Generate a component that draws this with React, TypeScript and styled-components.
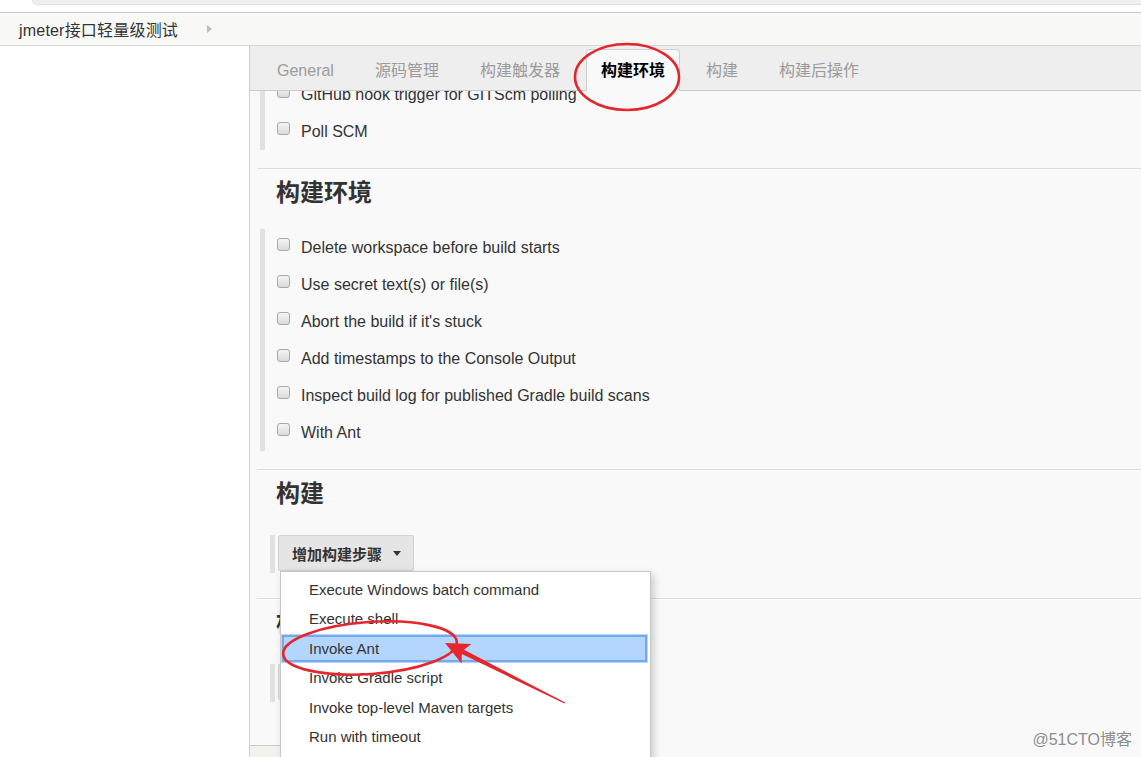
import React from 'react';
import styled, { createGlobalStyle } from 'styled-components';

const FONT = `'Liberation Sans', 'Noto Sans CJK SC', Arial, sans-serif`;

const GlobalStyle = createGlobalStyle`
  html, body {
    margin: 0;
    padding: 0;
    background: #fff;
    overflow: hidden;
  }
  body {
    font-family: ${FONT};
    color: #333;
  }
  * {
    box-sizing: border-box;
  }
`;

const Page = styled.div`
  position: relative;
  width: 1141px;
  height: 757px;
  display: flex;
  flex-direction: column;
  overflow: hidden;
`;

const TopStrip = styled.div`
  height: 13px;
  padding-left: 32px;
  background: #fff;
  border-bottom: 1px solid #c9c9c9;
`;

const StripBand = styled.div`
  height: 5px;
  background: #efefef;
  border-left: 1px solid #e0e0e0;
  border-bottom: 1px solid #e0e0e0;
  border-bottom-left-radius: 6px;
`;

const Breadcrumb = styled.div`
  height: 33px;
  display: flex;
  align-items: center;
  padding-left: 19px;
  background: #f8f8f6;
  border-bottom: 1px solid #d6d6d6;
  font-size: 16px;
  letter-spacing: 0.2px;
  color: #333;
`;

const CrumbArrow = styled.span`
  margin-left: 29px;
  width: 0;
  height: 0;
  border-left: 5px solid #bdbdbd;
  border-top: 4px solid transparent;
  border-bottom: 4px solid transparent;
`;

const Body = styled.div`
  flex: 1;
  display: flex;
  min-height: 0;
`;

const SidePanel = styled.div`
  width: 249px;
  background: #fff;
`;

const MainPanel = styled.div`
  flex: 1;
  min-width: 0;
  display: flex;
  flex-direction: column;
  background: #f9f9f9;
  border-left: 1px solid #cfcfcf;
`;

const TabBar = styled.div`
  position: relative;
  z-index: 2;
  height: 45px;
  display: flex;
  align-items: flex-end;
  gap: 11px;
  padding-left: 12px;
  background: #eee;
  border-bottom: 1px solid #cbcbcb;
`;

const Tab = styled.div<{ $active?: boolean }>`
  height: 42px;
  line-height: 41px;
  margin-bottom: -1px;
  padding: 0 14px;
  font-size: 16px;
  color: ${(p) => (p.$active ? '#000' : '#9b9b9b')};
  font-weight: ${(p) => (p.$active ? 'bold' : 'normal')};
  background: ${(p) => (p.$active ? '#f9f9f9' : 'transparent')};
  border: 1px solid ${(p) => (p.$active ? '#cfcfcf' : 'transparent')};
  border-bottom: none;
  border-radius: 4px 4px 0 0;
`;

const Viewport = styled.div`
  position: relative;
  flex: 1;
  overflow: hidden;
`;

const Inner = styled.div`
  margin-top: -27px;
  padding-left: 7px;
`;

const Section = styled.section<{ $plain?: boolean }>`
  border-top: ${(p) => (p.$plain ? 'none' : '1px solid #dcdcdc')};
  box-shadow: ${(p) => (p.$plain ? 'none' : 'inset 0 1px 0 #fff')};
`;

const SectionTitle = styled.h2`
  margin: 0;
  height: 48px;
  line-height: 48px;
  padding-left: 19px;
  font-size: 24px;
  font-weight: bold;
  color: #333;
`;

const Group = styled.div`
  margin: 12px 0 18px 3px;
  padding-left: 12px;
  border-left: 5px solid #e1e1e1;
`;

const Row = styled.label`
  height: 37px;
  display: flex;
  align-items: center;
  font-size: 16px;
  color: #333;
  white-space: nowrap;
`;

const Checkbox = styled.input.attrs({ type: 'checkbox' })`
  appearance: none;
  width: 13px;
  height: 13px;
  margin: 0 11px 6px 0;
  border: 1px solid #a8a8a8;
  border-radius: 3px;
  background: linear-gradient(#f5f5f5, #dadada);
`;

const ButtonGroup = styled.div`
  margin: 17px 0 25px 13px;
  padding: 0 0 2px 3px;
  border-left: 5px solid #e1e1e1;
`;

const ButtonWrap = styled.div`
  position: relative;
  display: inline-block;
  vertical-align: top;
`;

const AddButton = styled.button`
  height: 36px;
  display: flex;
  align-items: center;
  gap: 11px;
  padding: 0 12px 0 13px;
  background: #e5e5e5;
  border: 1px solid #d2d2d2;
  border-radius: 2px;
  font-family: ${FONT};
  font-size: 15px;
  font-weight: bold;
  color: #333;
`;

const Caret = styled.span`
  width: 0;
  height: 0;
  border-left: 4px solid transparent;
  border-right: 4px solid transparent;
  border-top: 5px solid #333;
`;

const Menu = styled.ul`
  position: absolute;
  z-index: 20;
  top: 36px;
  left: 2px;
  width: 371px;
  margin: 0;
  padding: 3px 2px 24px 0;
  list-style: none;
  background: #fff;
  border: 1px solid #c8c8c8;
  box-shadow: 3px 3px 8px rgba(0, 0, 0, 0.18);
`;

const MenuItem = styled.li<{ $active?: boolean }>`
  height: 29.4px;
  line-height: 29.4px;
  padding-left: 28px;
  font-size: 15px;
  color: #333;
  white-space: nowrap;
  background: ${(p) => (p.$active ? '#b4d5fd' : 'transparent')};
  outline: ${(p) => (p.$active ? '2px solid #74a9ee' : 'none')};
  outline-offset: -3px;
`;

const Footer = styled.div`
  position: absolute;
  z-index: 5;
  left: -1px;
  bottom: 0;
  width: 120px;
  height: 12px;
  background: #f3f3ee;
  border-top: 1px solid #c9c9c9;
  border-left: 1px solid #d8d8d8;
`;

const Watermark = styled.div`
  position: absolute;
  right: 9px;
  bottom: 7px;
  font-size: 16px;
  color: #8c8c8c;
  text-shadow: 0 0 2px #fff;
`;

const Annotations = styled.svg`
  position: absolute;
  top: 0;
  left: 0;
  z-index: 50;
  pointer-events: none;
`;

const tabs = ['General', '源码管理', '构建触发器', '构建环境', '构建', '构建后操作'];

const envOptions = [
  'Delete workspace before build starts',
  'Use secret text(s) or file(s)',
  "Abort the build if it's stuck",
  'Add timestamps to the Console Output',
  'Inspect build log for published Gradle build scans',
  'With Ant',
];

const buildSteps = [
  'Execute Windows batch command',
  'Execute shell',
  'Invoke Ant',
  'Invoke Gradle script',
  'Invoke top-level Maven targets',
  'Run with timeout',
];

const App = () => {
  return (
    <Page>
      <GlobalStyle />
      <TopStrip>
        <StripBand />
      </TopStrip>
      <Breadcrumb>
        jmeter接口轻量级测试
        <CrumbArrow />
      </Breadcrumb>
      <Body>
        <SidePanel />
        <MainPanel>
          <TabBar>
            {tabs.map((t) => (
              <Tab key={t} $active={t === '构建环境'}>
                {t}
              </Tab>
            ))}
          </TabBar>
          <Viewport>
            <Inner>
              <Section $plain>
                <Group>
                  <Row>
                    <Checkbox />
                    GitHub hook trigger for GITScm polling
                  </Row>
                  <Row>
                    <Checkbox />
                    Poll SCM
                  </Row>
                </Group>
              </Section>
              <Section>
                <SectionTitle>构建环境</SectionTitle>
                <Group>
                  {envOptions.map((o) => (
                    <Row key={o}>
                      <Checkbox />
                      {o}
                    </Row>
                  ))}
                </Group>
              </Section>
              <Section>
                <SectionTitle>构建</SectionTitle>
                <ButtonGroup>
                  <ButtonWrap>
                    <AddButton>
                      增加构建步骤
                      <Caret />
                    </AddButton>
                    <Menu>
                      {buildSteps.map((s) => (
                        <MenuItem key={s} $active={s === 'Invoke Ant'}>
                          {s}
                        </MenuItem>
                      ))}
                    </Menu>
                  </ButtonWrap>
                </ButtonGroup>
              </Section>
              <Section>
                <SectionTitle>构建后操作</SectionTitle>
                <ButtonGroup>
                  <ButtonWrap>
                    <AddButton>
                      增加构建后操作步骤
                      <Caret />
                    </AddButton>
                  </ButtonWrap>
                </ButtonGroup>
              </Section>
            </Inner>
            <Footer />
          </Viewport>
        </MainPanel>
      </Body>
      <Watermark>@51CTO博客</Watermark>
      <Annotations width="1141" height="757" viewBox="0 0 1141 757">
        <ellipse cx="627" cy="77" rx="52" ry="33" fill="none" stroke="#e5262d" strokeWidth="2.6" />
        <ellipse
          cx="370"
          cy="648"
          rx="87"
          ry="26"
          fill="none"
          stroke="#e5262d"
          strokeWidth="2.6"
          transform="rotate(-4 370 648)"
        />
        <polygon
          points="445,643 471.4,643.9 464,649.7 565.2,702.6 564.4,703.6 461.8,654.1 461.6,663.5"
          fill="#e5262d"
        />
      </Annotations>
    </Page>
  );
};

export default App;
